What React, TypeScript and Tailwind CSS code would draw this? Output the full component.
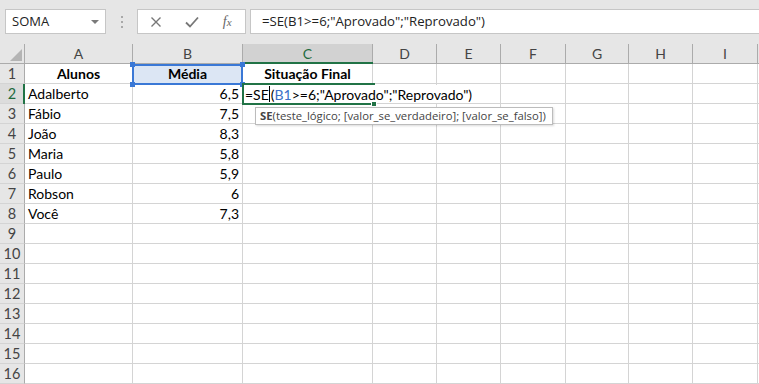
import React from "react";

const colLetters = ["A", "B", "C", "D", "E", "F", "G", "H", "I"];

const data: Record<number, [string, string, string]> = {
  1: ["Alunos", "Média", "Situação Final"],
  2: ["Adalberto", "6,5", ""],
  3: ["Fábio", "7,5", ""],
  4: ["João", "8,3", ""],
  5: ["Maria", "5,8", ""],
  6: ["Paulo", "5,9", ""],
  7: ["Robson", "6", ""],
  8: ["Você", "7,3", ""],
};

const cellFont = { fontFamily: "Lato, 'Liberation Sans', sans-serif" };
const uiFont = { fontFamily: "'Open Sans', 'Noto Sans', sans-serif" };

export default function App() {
  const rows = Array.from({ length: 16 }, (_, i) => i + 1);
  return (
    <div className="relative w-[759px] h-[384px] overflow-hidden bg-white select-none">
      {/* Top bar */}
      <div className="h-[44px] bg-[#e6e6e6] flex items-start pt-[9px]" style={uiFont}>
        <div className="ml-[5px] w-[101px] h-[25px] bg-white border border-[#c6c6c6] flex items-center justify-between pl-[6px] pr-[6px]">
          <span className="text-[13px] text-[#222] leading-none">SOMA</span>
          <svg width="8" height="5" viewBox="0 0 8 5" className="mt-[1px]">
            <path d="M0 0 L8 0 L4 4 Z" fill="#7a7a7a" />
          </svg>
        </div>
        <div className="w-[31px] h-[25px] flex flex-col items-center justify-center gap-[3px]">
          <div className="w-[2px] h-[2px] bg-[#a8a8a8]" />
          <div className="w-[2px] h-[2px] bg-[#a8a8a8]" />
          <div className="w-[2px] h-[2px] bg-[#a8a8a8]" />
        </div>
        <div className="w-[109px] h-[25px] bg-white border border-[#c6c6c6] flex items-center">
          <div className="w-[36px] flex justify-center">
            <svg width="12" height="12" viewBox="0 0 12 12">
              <path d="M1.5 1.5 L10.5 10.5 M10.5 1.5 L1.5 10.5" stroke="#777" strokeWidth="1.4" />
            </svg>
          </div>
          <div className="w-[36px] flex justify-center">
            <svg width="14" height="12" viewBox="0 0 14 12">
              <path d="M1 6.5 L5 10.5 L13 1.5" stroke="#777" strokeWidth="1.8" fill="none" />
            </svg>
          </div>
          <div className="w-[36px] flex justify-center">
            <span
              className="text-[14px] italic text-[#666] leading-none"
              style={{ fontFamily: "'Liberation Serif', 'DejaVu Serif', serif" }}
            >
              f<span className="text-[11px]">x</span>
            </span>
          </div>
        </div>
        <div className="ml-[4px] flex-1 h-[25px] bg-white border-y border-l border-[#c6c6c6] flex items-center pl-[11px]">
          <span className="text-[13.2px] text-[#222] leading-none">=SE(B1&gt;=6;"Aprovado";"Reprovado")</span>
        </div>
      </div>

      {/* Grid */}
      <div
        className="grid grid-cols-[25px_108px_110px_130px_64px_64px_65px_63px_64px_65px_1fr] auto-rows-[20px]"
        style={cellFont}
      >
        {/* Corner */}
        <div className="bg-[#e6e6e6] border-r border-b border-[#ababab] relative">
          <svg width="25" height="20" viewBox="0 0 25 20" className="absolute left-0 top-0">
            <path d="M22 5 L22 17 L10 17 Z" fill="#b4b4b4" />
          </svg>
        </div>
        {colLetters.map((l) => (
          <div
            key={l}
            className={`${
              l === "C" ? "bg-[#d2d2d2] text-[#1e6b3f]" : "bg-[#e6e6e6] text-[#444]"
            } border-r border-b border-[#ababab] flex items-center justify-center text-[14px]`}
          >
            {l}
          </div>
        ))}
        <div className="bg-[#e6e6e6] border-b border-[#ababab]" />

        {rows.map((r) => {
          const d = data[r];
          return (
            <React.Fragment key={r}>
              <div
                className={`${
                  r === 2 ? "bg-[#dcdcdc] text-[#1e6b3f]" : "bg-[#e6e6e6] text-[#444]"
                } border-r border-r-[#ababab] border-b border-b-[#d4d4d4] flex items-center justify-center text-[14.5px]`}
              >
                {r}
              </div>
              {/* A */}
              <div
                className={`border-r border-b border-[#d4d4d4] flex items-center px-[3px] text-[14px] text-black ${
                  r === 1 ? "justify-center font-bold" : ""
                }`}
              >
                {d ? d[0] : ""}
              </div>
              {/* B */}
              <div
                className={`border-r border-b border-[#d4d4d4] flex items-center px-[3px] text-[14px] text-black ${
                  r === 1 ? "justify-center font-bold bg-[#dce6f4]" : "justify-end"
                }`}
              >
                {d ? d[1] : ""}
              </div>
              {/* C */}
              <div
                className={`border-r border-b border-[#d4d4d4] flex items-center px-[3px] text-[14px] text-black ${
                  r === 1 ? "justify-center font-bold" : ""
                }`}
              >
                {d ? d[2] : ""}
              </div>
              {[0, 1, 2, 3, 4, 5].map((c) => (
                <div key={c} className="border-r border-b border-[#d4d4d4]" />
              ))}
              <div className="border-b border-[#d4d4d4]" />
            </React.Fragment>
          );
        })}
      </div>

      {/* Column C header selection line */}
      <div className="absolute left-[243px] top-[62px] w-[130px] h-[2px] bg-[#217346]" />
      {/* Row 2 header selection line */}
      <div className="absolute left-[23px] top-[84px] w-[2px] h-[20px] bg-[#217346]" />

      {/* B1 reference frame */}
      <div className="absolute left-[132px] top-[64px] w-[111px] h-[21px] border-2 border-[#3a78d6]" />
      <div className="absolute left-[130px] top-[62px] w-[5px] h-[5px] bg-[#3a78d6]" />
      <div className="absolute left-[240px] top-[62px] w-[5px] h-[5px] bg-[#3a78d6]" />
      <div className="absolute left-[130px] top-[82px] w-[5px] h-[5px] bg-[#3a78d6]" />
      <div className="absolute left-[240px] top-[82px] w-[5px] h-[5px] bg-[#3a78d6]" />

      {/* C2 editing area */}
      <div
        className="absolute left-[244px] top-[85px] w-[232px] h-[18px] bg-white flex items-center pl-[1px] text-[14px] text-black whitespace-nowrap"
        style={cellFont}
      >
        <span>=SE</span>
        <span className="inline-block w-[1px] h-[16px] bg-black mx-[0.5px]" />
        <span>(</span>
        <span className="text-[#3a6fc8]">B1</span>
        <span>&gt;=6;"Aprovado";"Reprovado")</span>
      </div>
      <div className="absolute left-[242px] top-[83px] w-[133px] h-[2px] bg-[#217346]" />
      <div className="absolute left-[242px] top-[83px] w-[2px] h-[22px] bg-[#217346]" />
      <div className="absolute left-[242px] top-[103px] w-[131px] h-[2px] bg-[#217346]" />
      <div className="absolute left-[371px] top-[101px] w-[6px] h-[6px] bg-[#217346] border border-white" />

      {/* Tooltip */}
      <div
        className="absolute left-[255px] top-[107px] w-[298px] h-[18px] bg-white border border-[#bcbcbc] shadow-[1px_1px_2px_rgba(0,0,0,0.15)] flex items-center pl-[4px] text-[11.3px] text-[#444] whitespace-nowrap"
        style={uiFont}
      >
        <span className="font-bold">SE</span>
        <span>(teste_lógico; [valor_se_verdadeiro]; [valor_se_falso])</span>
      </div>
    </div>
  );
}
